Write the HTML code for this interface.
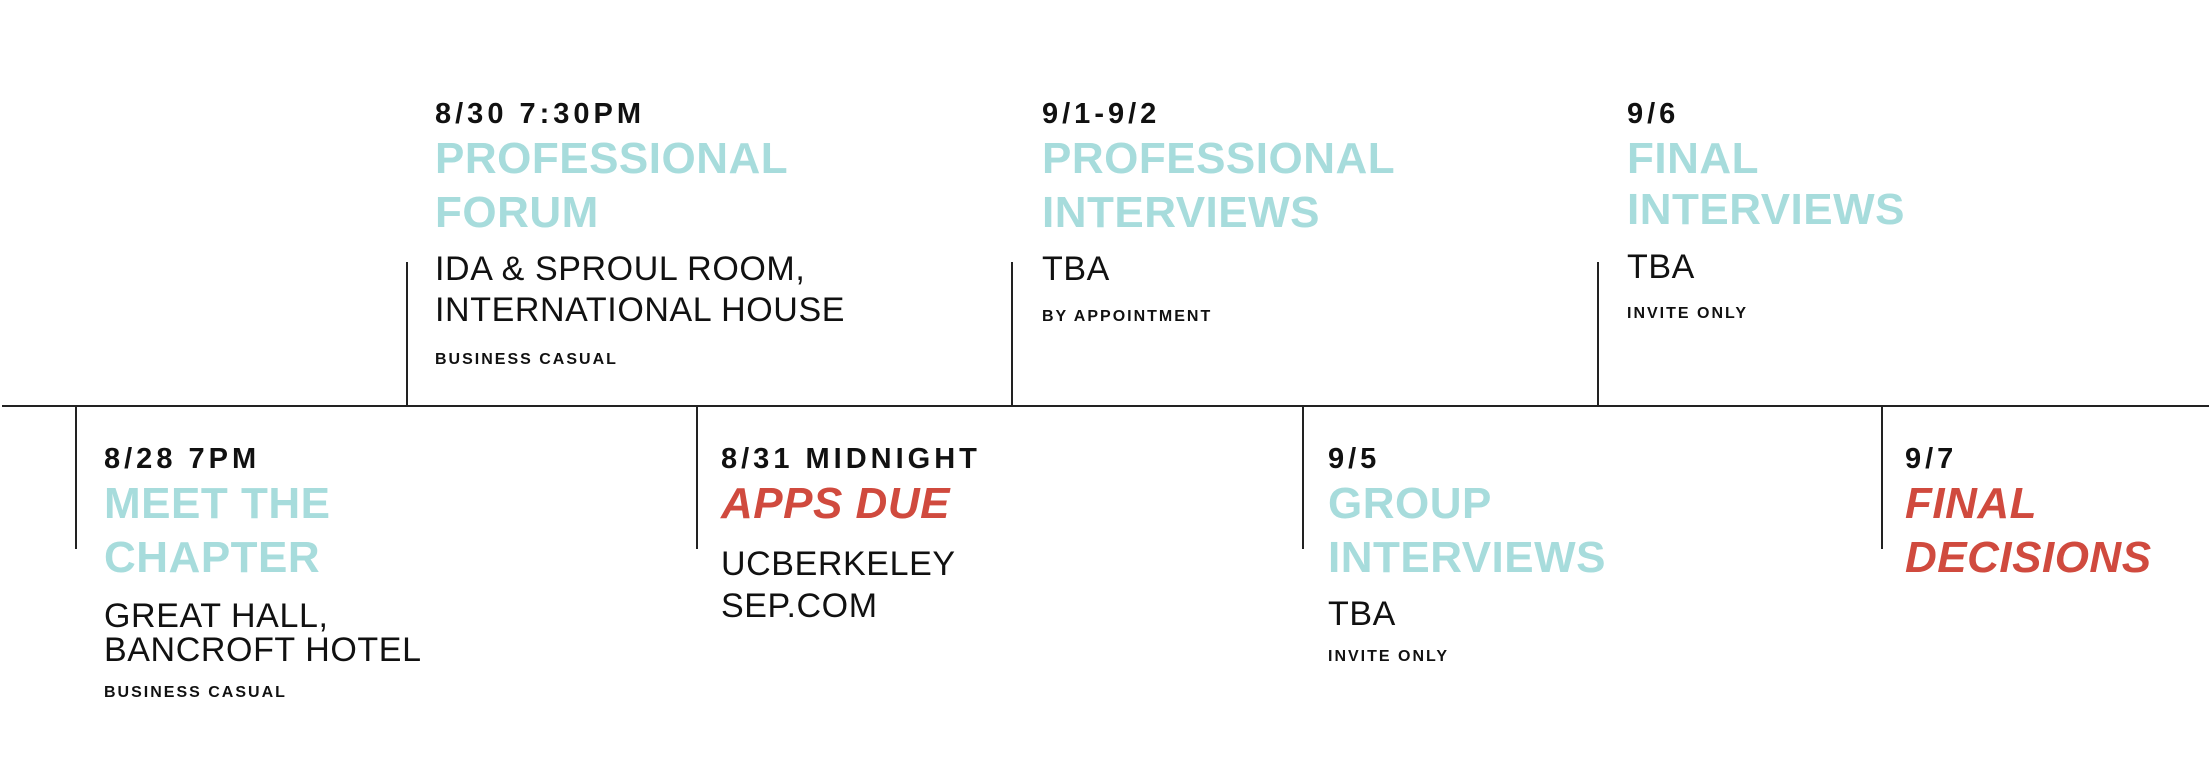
<!DOCTYPE html>
<html><head><meta charset="utf-8"><style>
html,body{margin:0;padding:0;background:#fff;}
body{width:2209px;height:765px;position:relative;overflow:hidden;font-family:"Liberation Sans",sans-serif;color:#111;}
.h{position:absolute;left:2px;right:0;top:405px;height:2px;background:#222;}
.v{position:absolute;width:2px;background:#222;}
.t{position:absolute;white-space:nowrap;line-height:1;}
.d{font-size:29px;font-weight:bold;letter-spacing:4px;}
.ti{font-size:44px;font-weight:bold;letter-spacing:0.5px;color:#a7dcdc;}
.r{color:#d04a3e;font-style:italic;}
.l{font-size:34px;letter-spacing:0.6px;}
.s{font-size:16px;font-weight:bold;letter-spacing:2px;}
</style></head><body>
<div class="h"></div>
<div class="v" style="left:406px;top:262px;height:144px"></div>
<div class="v" style="left:1011px;top:262px;height:144px"></div>
<div class="v" style="left:1597px;top:262px;height:144px"></div>
<div class="v" style="left:75px;top:406px;height:143px"></div>
<div class="v" style="left:696px;top:406px;height:143px"></div>
<div class="v" style="left:1302px;top:406px;height:143px"></div>
<div class="v" style="left:1881px;top:406px;height:143px"></div>

<div class="t d" style="left:435px;top:100px">8/30 7:30PM</div>
<div class="t ti" style="left:435px;top:137px">PROFESSIONAL</div>
<div class="t ti" style="left:435px;top:191px">FORUM</div>
<div class="t l" style="left:435px;top:252px">IDA &amp; SPROUL ROOM,</div>
<div class="t l" style="left:435px;top:293px">INTERNATIONAL HOUSE</div>
<div class="t s" style="left:435px;top:352px">BUSINESS CASUAL</div>

<div class="t d" style="left:104px;top:445px">8/28 7PM</div>
<div class="t ti" style="left:104px;top:482px">MEET THE</div>
<div class="t ti" style="left:104px;top:536px">CHAPTER</div>
<div class="t l" style="left:104px;top:599px">GREAT HALL,</div>
<div class="t l" style="left:104px;top:633px">BANCROFT HOTEL</div>
<div class="t s" style="left:104px;top:685px">BUSINESS CASUAL</div>

<div class="t d" style="left:721px;top:445px">8/31 MIDNIGHT</div>
<div class="t ti r" style="left:721px;top:482px">APPS DUE</div>
<div class="t l" style="left:721px;top:547px">UCBERKELEY</div>
<div class="t l" style="left:721px;top:589px">SEP.COM</div>

<div class="t d" style="left:1042px;top:100px">9/1-9/2</div>
<div class="t ti" style="left:1042px;top:137px">PROFESSIONAL</div>
<div class="t ti" style="left:1042px;top:191px">INTERVIEWS</div>
<div class="t l" style="left:1042px;top:252px">TBA</div>
<div class="t s" style="left:1042px;top:309px">BY APPOINTMENT</div>

<div class="t d" style="left:1328px;top:445px">9/5</div>
<div class="t ti" style="left:1328px;top:482px">GROUP</div>
<div class="t ti" style="left:1328px;top:536px">INTERVIEWS</div>
<div class="t l" style="left:1328px;top:597px">TBA</div>
<div class="t s" style="left:1328px;top:649px">INVITE ONLY</div>

<div class="t d" style="left:1627px;top:100px">9/6</div>
<div class="t ti" style="left:1627px;top:137px">FINAL</div>
<div class="t ti" style="left:1627px;top:188px">INTERVIEWS</div>
<div class="t l" style="left:1627px;top:250px">TBA</div>
<div class="t s" style="left:1627px;top:306px">INVITE ONLY</div>

<div class="t d" style="left:1905px;top:445px">9/7</div>
<div class="t ti r" style="left:1905px;top:482px">FINAL</div>
<div class="t ti r" style="left:1905px;top:536px">DECISIONS</div>
</body></html>
